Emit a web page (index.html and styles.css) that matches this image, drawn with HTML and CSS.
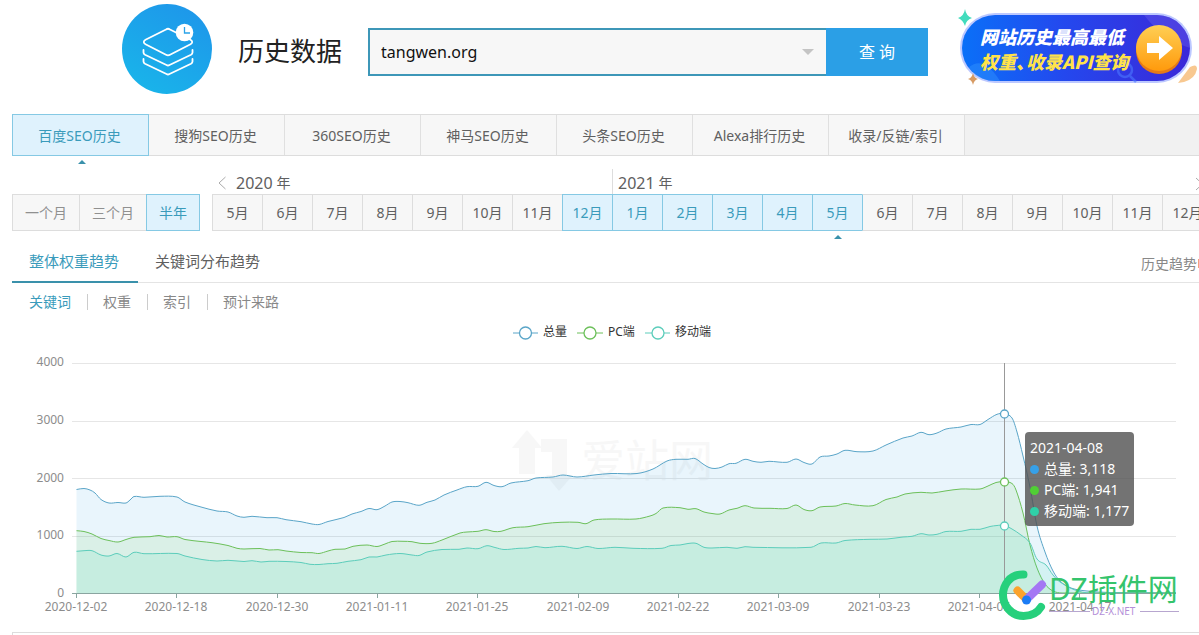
FILE: index.html
```html
<!DOCTYPE html>
<html lang="zh-CN">
<head>
<meta charset="utf-8">
<title>历史数据</title>
<link rel="stylesheet" href="styles.css">
</head>
<body>
<header class="header">
  <svg class="logo" viewBox="0 0 90 90" aria-hidden="true">
    <defs><linearGradient id="lg" x1="0.8" y1="0" x2="0.2" y2="1"><stop offset="0" stop-color="#1e96ea"/><stop offset="1" stop-color="#19b5ea"/></linearGradient></defs>
    <circle cx="45" cy="45" r="45" fill="url(#lg)"/>
    <g fill="none" stroke="#fff" stroke-width="1.8" stroke-linejoin="round" stroke-linecap="round">
      <path d="M44 25.500Q46 24 48 25.500L68.500 35.800Q72 38 68.500 40.200L48 50.800Q46 52 44 50.800L23.500 40.200Q20 38 23.500 35.800Z"/>
      <path d="M21.500 46V48.500Q21.500 50 23 50.800L44.500 61Q46 62 47.500 61L69 50.800Q70.500 50 70.500 48.500V46"/>
      <path d="M21.500 55V57.500Q21.500 59 23 59.800L44.500 70Q46 71 47.500 70L69 59.800Q70.500 59 70.500 57.500V55"/>
    </g>
    <circle cx="62.500" cy="28.500" r="8.800" fill="#fff"/>
    <path d="M62.500 23V29H68" fill="none" stroke="#2aa2e8" stroke-width="1.300"/>
  </svg>
  <h1 class="title">历史数据</h1>
  <form class="search">
    <div class="search-field">
      <input class="search-input" type="text" value="tangwen.org" aria-label="域名">
      <span class="search-arrow"></span>
    </div>
    <button class="search-button" type="button">查 询</button>
  </form>
  <a class="promo" href="#">
    <svg class="promo-art" viewBox="0 0 244 84" aria-hidden="true">
      <defs>
        <linearGradient id="pg" x1="0" x2="1"><stop offset="0" stop-color="#0a70f8"/><stop offset="0.450" stop-color="#2448ee"/><stop offset="1" stop-color="#3b28d8"/></linearGradient>
        <linearGradient id="og" x1="0" y1="0" x2="0" y2="1"><stop offset="0" stop-color="#ffcf54"/><stop offset="1" stop-color="#ff9a0c"/></linearGradient>
      </defs>
      <path d="M224 76L236 60Q243 56 243 62Q241 72 230 75Z" fill="#f8c890"/>
      <rect x="6" y="6" width="232" height="70" rx="35" fill="#bcc8ff"/>
      <rect x="8" y="8" width="228" height="66" rx="33" fill="url(#pg)"/>
      <path d="M190 8H203A33 33 0 0 1 236 41Q208 32 190 8Z" fill="#6b62ee" opacity=".4"/>
      <path d="M15 60Q30 48 46 74H40Q22 73 15 60Z" fill="#399bff" opacity=".4"/>
      <g fill="none" stroke="#4c78ff" stroke-width="2.500" opacity=".6"><circle cx="171" cy="63" r="7"/><path d="M176 69L182 75"/></g>
      <circle cx="205" cy="44" r="23" fill="#e67b16"/>
      <circle cx="205" cy="41" r="23" fill="url(#og)"/>
      <path d="M193 36H205V29L219 41L205 53V46H193Z" fill="#fff"/>
      <path d="M11 2Q12 9 18 11Q12 13 11 19Q9 13 4 11Q10 9 11 2Z" fill="#42dcbd"/>
      <path d="M19 66Q20 71 24 72Q20 73 19 78Q18 73 14 72Q18 71 19 66Z" fill="#d79a62"/>
    </svg>
    <span class="promo-text"><b>网站历史最高最低</b><b class="promo-yellow">权重<i class="promo-comma">、</i>收录API查询</b></span>
  </a>
</header>

<nav class="tabs">
  <a class="tab tab-on" href="#">百度SEO历史</a><a class="tab" href="#">搜狗SEO历史</a><a class="tab" href="#">360SEO历史</a><a class="tab" href="#">神马SEO历史</a><a class="tab" href="#">头条SEO历史</a><a class="tab" href="#">Alexa排行历史</a><a class="tab" href="#">收录/反链/索引</a>
</nav>

<section class="period">
  <div class="ranges">
    <button class="range">一个月</button><button class="range">三个月</button><button class="range range-on">半年</button>
  </div>
  <div class="timeline">
    <div class="years">
      <div class="year"><svg class="chev" viewBox="0 0 8 14"><path d="M7.500 1L1 7L7.500 13"/></svg><span class="num">2020</span> 年</div>
      <div class="year year-next"><span class="num">2021</span> 年</div>
      <svg class="chev chev-right" viewBox="0 0 8 14"><path d="M1 1L7.500 7L1 13"/></svg>
    </div>
    <div class="months">
      <button class="month">5月</button><button class="month">6月</button><button class="month">7月</button><button class="month">8月</button><button class="month">9月</button><button class="month">10月</button><button class="month">11月</button><button class="month month-on">12月</button><button class="month month-on">1月</button><button class="month month-on">2月</button><button class="month month-on">3月</button><button class="month month-on">4月</button><button class="month month-on month-end">5月</button><button class="month">6月</button><button class="month">7月</button><button class="month">8月</button><button class="month">9月</button><button class="month">10月</button><button class="month">11月</button><button class="month">12月</button>
    </div>
  </div>
</section>

<nav class="views">
  <a class="view view-on" href="#">整体权重趋势</a>
  <a class="view" href="#">关键词分布趋势</a>
  <a class="compare" href="#">历史趋势<span class="compare-mark"></span></a>
</nav>
<nav class="metrics">
  <a class="metric metric-on" href="#">关键词</a><a class="metric" href="#">权重</a><a class="metric" href="#">索引</a><a class="metric" href="#">预计来路</a>
</nav>

<section class="chart">
  <svg class="plot" viewBox="12 316 1187 306" role="img" aria-label="关键词趋势">
    <g class="ghost">
      <path d="M512 448L527 430L542 448H535V474H519V448Z"/>
      <path d="M541 439H567V475H573L559 491L546 475H552V452H541Z"/>
      <text x="581" y="477">爱站网</text>
    </g>
    <g class="grid"><path d="M72 363.500H1176M72 421.500H1176M72 478.500H1176M72 536.500H1176"/></g>
    <g id="series"></g>
    <path class="axis" d="M72 593.500H1176M76.500 593V598M176.500 593V598M277.500 593V598M377.500 593V598M477.500 593V598M578.500 593V598M678.500 593V598M778.500 593V598M879.500 593V598M979.500 593V598M1079.500 593V598"/>
    <g class="ylab"><text x="64" y="366">4000</text><text x="64" y="424">3000</text><text x="64" y="482">2000</text><text x="64" y="539">1000</text><text x="64" y="597">0</text></g>
    <g class="xlab"><text x="76" y="611">2020-12-02</text><text x="176" y="611">2020-12-18</text><text x="277" y="611">2020-12-30</text><text x="377" y="611">2021-01-11</text><text x="477" y="611">2021-01-25</text><text x="578" y="611">2021-02-09</text><text x="678" y="611">2021-02-22</text><text x="778" y="611">2021-03-09</text><text x="879" y="611">2021-03-23</text><text x="979" y="611">2021-04-05</text><text x="1080" y="611">2021-04-17</text></g>
    <path class="pointer" d="M1004.500 363V593"/>
    <g class="dots"><circle class="s1" cx="1004.500" cy="414" r="4"/><circle class="s2" cx="1004.500" cy="482" r="4"/><circle class="s3" cx="1004.500" cy="526" r="4"/></g>
    <g class="legend">
      <path class="s1" d="M513 333H538"/><circle class="s1" cx="525.500" cy="333" r="6"/><text x="543" y="336">总量</text>
      <path class="s2" d="M577 333H603"/><circle class="s2" cx="590" cy="333" r="6"/><text x="608" y="336">PC端</text>
      <path class="s3" d="M645 333H670"/><circle class="s3" cx="658" cy="333" r="6"/><text x="675" y="336">移动端</text>
    </g>
  </svg>
  <div class="tooltip">
    <div>2021-04-08</div>
    <div><span class="pip pip-1"></span>总量: 3,118</div>
    <div><span class="pip pip-2"></span>PC端: 1,941</div>
    <div><span class="pip pip-3"></span>移动端: 1,177</div>
  </div>
  <svg class="brand" viewBox="998 568 190 54" aria-hidden="true">
    <path d="M1023.500 574.500C1009 574 1003 586 1003 595C1003 605 1011 616 1023.500 616C1032 616 1038 612 1041 607" fill="none" stroke="#26d07c" stroke-width="8" stroke-linecap="round"/>
    <g stroke-width="8" stroke-linecap="round"><path d="M1017.500 590.500L1026 599" stroke="#fba32c"/><path d="M1042 584.500L1027 599" stroke="#a477f4"/></g>
    <circle cx="1026.500" cy="600" r="4.500" fill="#1b7cf5"/>
    <text class="brand-name" x="1049" y="600">DZ插件网</text>
    <path d="M1049 611.500H1090M1140 611.500H1179" stroke="#b7a6cf"/>
    <text class="brand-site" x="1092" y="615">DZ-X.NET</text>
  </svg>
</section>
<section class="next-panel"></section>
<script src="chart.js"></script>
</body>
</html>
```
FILE: styles.css
```css
* { box-sizing: border-box; }
body {
  margin: 0;
  padding-left: 12px;
  overflow: hidden;
  background: #fff;
  color: #606060;
  font: 14px/20px "Noto Sans", "Noto Sans CJK SC", sans-serif;
}
a { color: inherit; text-decoration: none; }
button, input { font: inherit; color: inherit; margin: 0; border-radius: 0; }

.header { display: flex; align-items: center; height: 114px; padding: 4px 0 20px 110px; }
.logo { flex: none; width: 90px; height: 90px; }
.title { flex: none; margin: 2px 26px 0; font: 400 26px/36px "Noto Sans CJK SC", sans-serif; color: #222; white-space: nowrap; }
.search { display: flex; flex: none; width: 560px; height: 48px; margin-top: 6px; }
.search-field { display: flex; align-items: center; flex: 1; padding-right: 12px; border: 2px solid #3d97b8; border-right: 0; background: #f7f7f7; }
.search-input { flex: 1; min-width: 0; padding: 0 0 0 11px; border: 0; outline: 0; background: none; color: #111; font-size: 16px; }
.search-arrow { border: 6px solid transparent; border-top-color: #c4c4c4; border-bottom: 0; }
.search-button { width: 102px; border: 0; background: #2b9fe6; color: #fff; font-size: 16px; }
.promo { position: relative; flex: none; width: 244px; height: 84px; margin-left: 26px; }
.promo-art { display: block; width: 244px; height: 84px; }
.promo-text { position: absolute; left: 26px; top: 17px; color: #fff; font: italic 900 18px/25px "Noto Sans CJK SC", sans-serif; white-space: nowrap; }
.promo-text b { display: block; font-weight: 900; }
.promo-text .promo-yellow { color: #ffe34a; }
.promo-comma { display: inline-block; width: 10px; }

.tabs { display: flex; height: 42px; border: solid #ddd; border-width: 1px 0; background: #f1f1f1; }
.tab { flex: none; width: 136px; padding: 11px 2px 0 0; border-right: 1px solid #e0e0e0; background: #f7f7f7; text-align: center; }
.tab-on { position: relative; width: 137px; margin: -1px 0; border: 1px solid #85c9e4; background: #dff2fd; color: #3a9bbb; }
.tab-on::after, .month-end::after { content: ""; position: absolute; left: 50%; top: 45px; border: 4px solid transparent; border-bottom-color: #3a91ab; border-top: 0; }
.tab-on::after { margin-left: -3px; }

.period { display: flex; align-items: flex-end; gap: 12px; height: 75px; }
.ranges, .months { display: flex; height: 37px; }
.ranges { flex: none; }
.range { width: 67px; padding: 0; border: 1px solid #ddd; border-right: 0; background: #f7f7f7; color: #909090; }
.range-on { width: 54px; border: 1px solid #85c9e4; background: #dff2fd; color: #3a9bbb; }
.timeline { flex: 1; min-width: 0; }
.years { position: relative; display: flex; height: 25px; }
.year { display: flex; align-items: center; gap: 4px; width: 400px; padding: 2px 0 0 6px; white-space: nowrap; }
.year .chev { margin-right: 6px; }
.year-next { padding-left: 5px; border-left: 1px solid #ddd; }
.num { font-size: 16px; }
.chev { width: 8px; height: 14px; fill: none; stroke: #aaa; stroke-width: 1; }
.chev-right { position: absolute; right: -4px; top: 8px; }
.month { position: relative; flex: none; width: 50px; padding: 0; border: 1px solid #ddd; border-right: 0; background: #f7f7f7; }
.month-on { border-color: #85c9e4; background: #dff2fd; color: #3a9bbb; }
.month-on + .month:not(.month-on) { border-left-color: #85c9e4; }
.month-end::after { top: 40px; margin-left: -4px; }

.views { display: flex; height: 52px; border-bottom: 1px solid #e4e4e4; font-size: 15px; }
.view { padding: 20px 17px 0; white-space: nowrap; }
.view-on { height: 52px; width: 126px; border-bottom: 2px solid #3a91ab; color: #3a9bbb; }
.compare { display: flex; align-items: center; gap: 1px; margin-left: auto; padding-top: 14px; color: #888; font-size: 14px; }
.compare-mark { width: 1px; height: 9px; background: #f3a080; }
.metrics { display: flex; align-items: center; height: 33px; padding: 5px 0 0 17px; color: #888; line-height: 16px; }
.metric + .metric { margin-left: 16px; padding-left: 15px; border-left: 1px solid #ccc; }
.metrics .metric-on { color: #3a9bbb; }

.chart { position: relative; }
.plot { display: block; width: 100%; }
.ghost { fill: #f7f7f7; }
.ghost text { font-size: 44px; }
.grid { stroke: #e6e6e6; }
.axis { fill: none; stroke: #8aa5a0; }
.pointer { stroke: #999; stroke-width: 1; }
.ylab, .xlab { fill: #8c8c8c; font-size: 12px; text-anchor: middle; }
.ylab { text-anchor: end; }
.legend { font-size: 12px; fill: #333; }
.s1 { stroke: #5aa5c8; }
.s2 { stroke: #6cc05a; }
.s3 { stroke: #5ccdbb; }
.line { fill: none; stroke-width: 1; }
.area-1 { fill: rgba(35, 155, 225, .1); }
.area-2 { fill: rgba(96, 200, 64, .11); }
.area-3 { fill: rgba(40, 220, 175, .11); }
.dots circle, .legend circle { fill: #fff; stroke-width: 1.300; }
.tooltip { position: absolute; left: 1013px; top: 116px; padding: 5px; border-radius: 4px; background: rgba(80, 80, 80, .8); color: #fff; line-height: 21px; white-space: nowrap; }
.pip { display: inline-block; width: 9px; height: 9px; margin-right: 5px; border-radius: 50%; }
.pip-1 { background: #36a0e8; }
.pip-2 { background: #50cf35; }
.pip-3 { background: #2fd0a8; }
.brand { position: absolute; left: 986px; top: 252px; width: 190px; height: 54px; }
.brand-name { fill: #35c46c; font-size: 30px; }
.brand-site { fill: #b48fd8; font-size: 10px; }
.next-panel { height: 3px; margin-top: 10px; border: solid #ddd; border-width: 1px 0 0 1px; }
```
FILE: chart.js
```js
const BASE = 593;
const series = [
  [76.5,489.5, 84,488.5, 90,490, 95,493, 101,499.5, 109,503, 118,502.5, 126,503, 130,500, 134,496.5, 144,497.3, 160,496.3, 177,497, 185,502, 201,507, 217,511, 228,512, 237,516, 244,517.3, 252,516.3, 267,517.7, 277,517.7, 286,519.7, 301,521.7, 312,524, 319,524.5, 328,521.5, 344,517.5, 352,514, 361,511.5, 369,508.5, 377,509.7, 385,506, 392,502, 400,501.5, 408,502.7, 419,505.3, 427,502.3, 435,500, 444,495, 457,490, 467,486.7, 478,486.3, 486,482.3, 494,485.5, 502,486.7, 511,483, 528,480.7, 536,478, 553,477, 563,475, 577,477, 594,475, 611,473.5, 637,473.5, 653,469, 667,461, 676,459.3, 688,459.3, 695,458.5, 703,464, 709,467.5, 715,468.5, 722,467, 729,463.7, 736,463.3, 745,459.3, 753,461.3, 761,462.3, 769,461.3, 787,462.3, 796,459, 804,462.5, 812,464, 820,457, 829,456, 837,454, 845,450.3, 857,451.7, 873,451, 886,445, 903,438, 912,436, 921,432.3, 929,434.7, 937,433, 946,429, 961,427, 971,424.5, 980,424.5, 988,419.5, 997,414.3, 1004,413.7, 1012,418, 1017,432, 1023,456, 1030,487, 1037,526, 1045,552, 1053,571, 1060,581, 1071,588, 1087,591, 1110,592.5, 1176,593],
  [76.5,530.7, 84,531.5, 92,534, 101,538.5, 109,540.5, 118,542, 126,539.5, 134,537.3, 150,536.7, 159,535.5, 167,537, 177,536.7, 185,539.5, 201,541.5, 212,542.7, 228,545.5, 237,548.3, 244,549, 260,548.5, 269,550, 278,549.7, 286,551, 301,552.5, 312,552.7, 319,553.5, 328,551, 335,549.3, 345,549, 353,546.3, 367,545, 377,546.5, 385,544, 392,541.5, 403,541.3, 412,541.7, 420,543.3, 432,543.3, 442,540, 460,533, 467,532, 478,531.3, 486,529.7, 494,531.5, 501,531.3, 513,527.7, 528,526.7, 544,523.7, 561,522.3, 578,522.3, 586,523.7, 594,520, 611,519, 636,519, 650,516, 656,513.5, 663,508, 680,507.7, 688,509.3, 696,508.7, 704,512, 712,513.5, 720,514, 729,510, 737,508.3, 745,505.7, 754,508, 770,508.3, 787,508.5, 796,505, 804,509.5, 812,510.7, 820,507, 836,506, 845,503.5, 855,505, 873,505.7, 886,499.5, 897,497, 905,494, 921,492.3, 932,493, 945,491, 961,489, 980,489, 988,486, 996,482.5, 1004,481.7, 1012,483.5, 1016,490, 1023,513, 1030,545, 1037,568, 1045,584, 1053,591, 1062,593, 1176,593],
  [76.5,551.3, 84,550.7, 92,550.7, 101,555, 109,556, 117,553.5, 126,557, 134,552.3, 144,553.7, 177,553.5, 185,556, 202,559.5, 217,561, 228,560.3, 244,561.5, 252,560.7, 261,562, 269,561.3, 286,561.5, 301,562.5, 310,564.3, 319,564.5, 328,563.7, 337,563.3, 348,561.3, 361,559.7, 369,557, 377,557, 386,555, 400,553.5, 412,555, 419,555.5, 427,552, 442,549.5, 459,549.3, 467,548, 478,548.7, 487,545.7, 495,547.5, 504,549.5, 519,548.3, 528,548, 536,546.5, 545,547.7, 562,546.3, 577,548.5, 587,546.5, 598,548.5, 615,547.3, 633,548.3, 662,548.3, 671,545.5, 680,545, 688,543.5, 696,543.3, 704,547.3, 712,548, 727,547.3, 737,548.3, 745,546.7, 753,547.3, 811,547.3, 821,543, 836,543, 845,540.5, 870,539.3, 887,539, 903,537, 912,536.3, 921,533.7, 929,535, 937,534.3, 946,531.5, 961,531.3, 971,529.3, 980,529.3, 990,526.5, 997,525.5, 1004,525.3, 1012,529, 1021,535, 1030,543, 1037,559, 1046,565, 1053,575, 1060,582, 1075,590, 1090,593, 1176,593]
];

// Smooth curve through the points; control points sit a third of the way along each step.
function curve(flat) {
  const p = [];
  for (let i = 0; i < flat.length; i += 2) p.push([flat[i], flat[i + 1]]);
  const slope = p.map((_, i) => {
    const a = p[Math.max(0, i - 1)], b = p[Math.min(p.length - 1, i + 1)];
    return (b[1] - a[1]) / (b[0] - a[0]);
  });
  let d = `M${p[0]}`;
  for (let i = 1; i < p.length; i++) {
    const [x0, y0] = p[i - 1], [x1, y1] = p[i], h = (x1 - x0) / 3;
    const c0 = Math.min(BASE, y0 + slope[i - 1] * h), c1 = Math.min(BASE, y1 - slope[i] * h);
    d += `C${x0 + h},${c0} ${x1 - h},${c1} ${x1},${y1}`;
  }
  return d;
}

let markup = "";
series.forEach((flat, i) => {
  const d = curve(flat);
  markup += `<path class="area-${i + 1}" d="${d}V${BASE}H${flat[0]}Z"/><path class="line s${i + 1}" d="${d}"/>`;
});
document.getElementById("series").innerHTML = markup;
```
